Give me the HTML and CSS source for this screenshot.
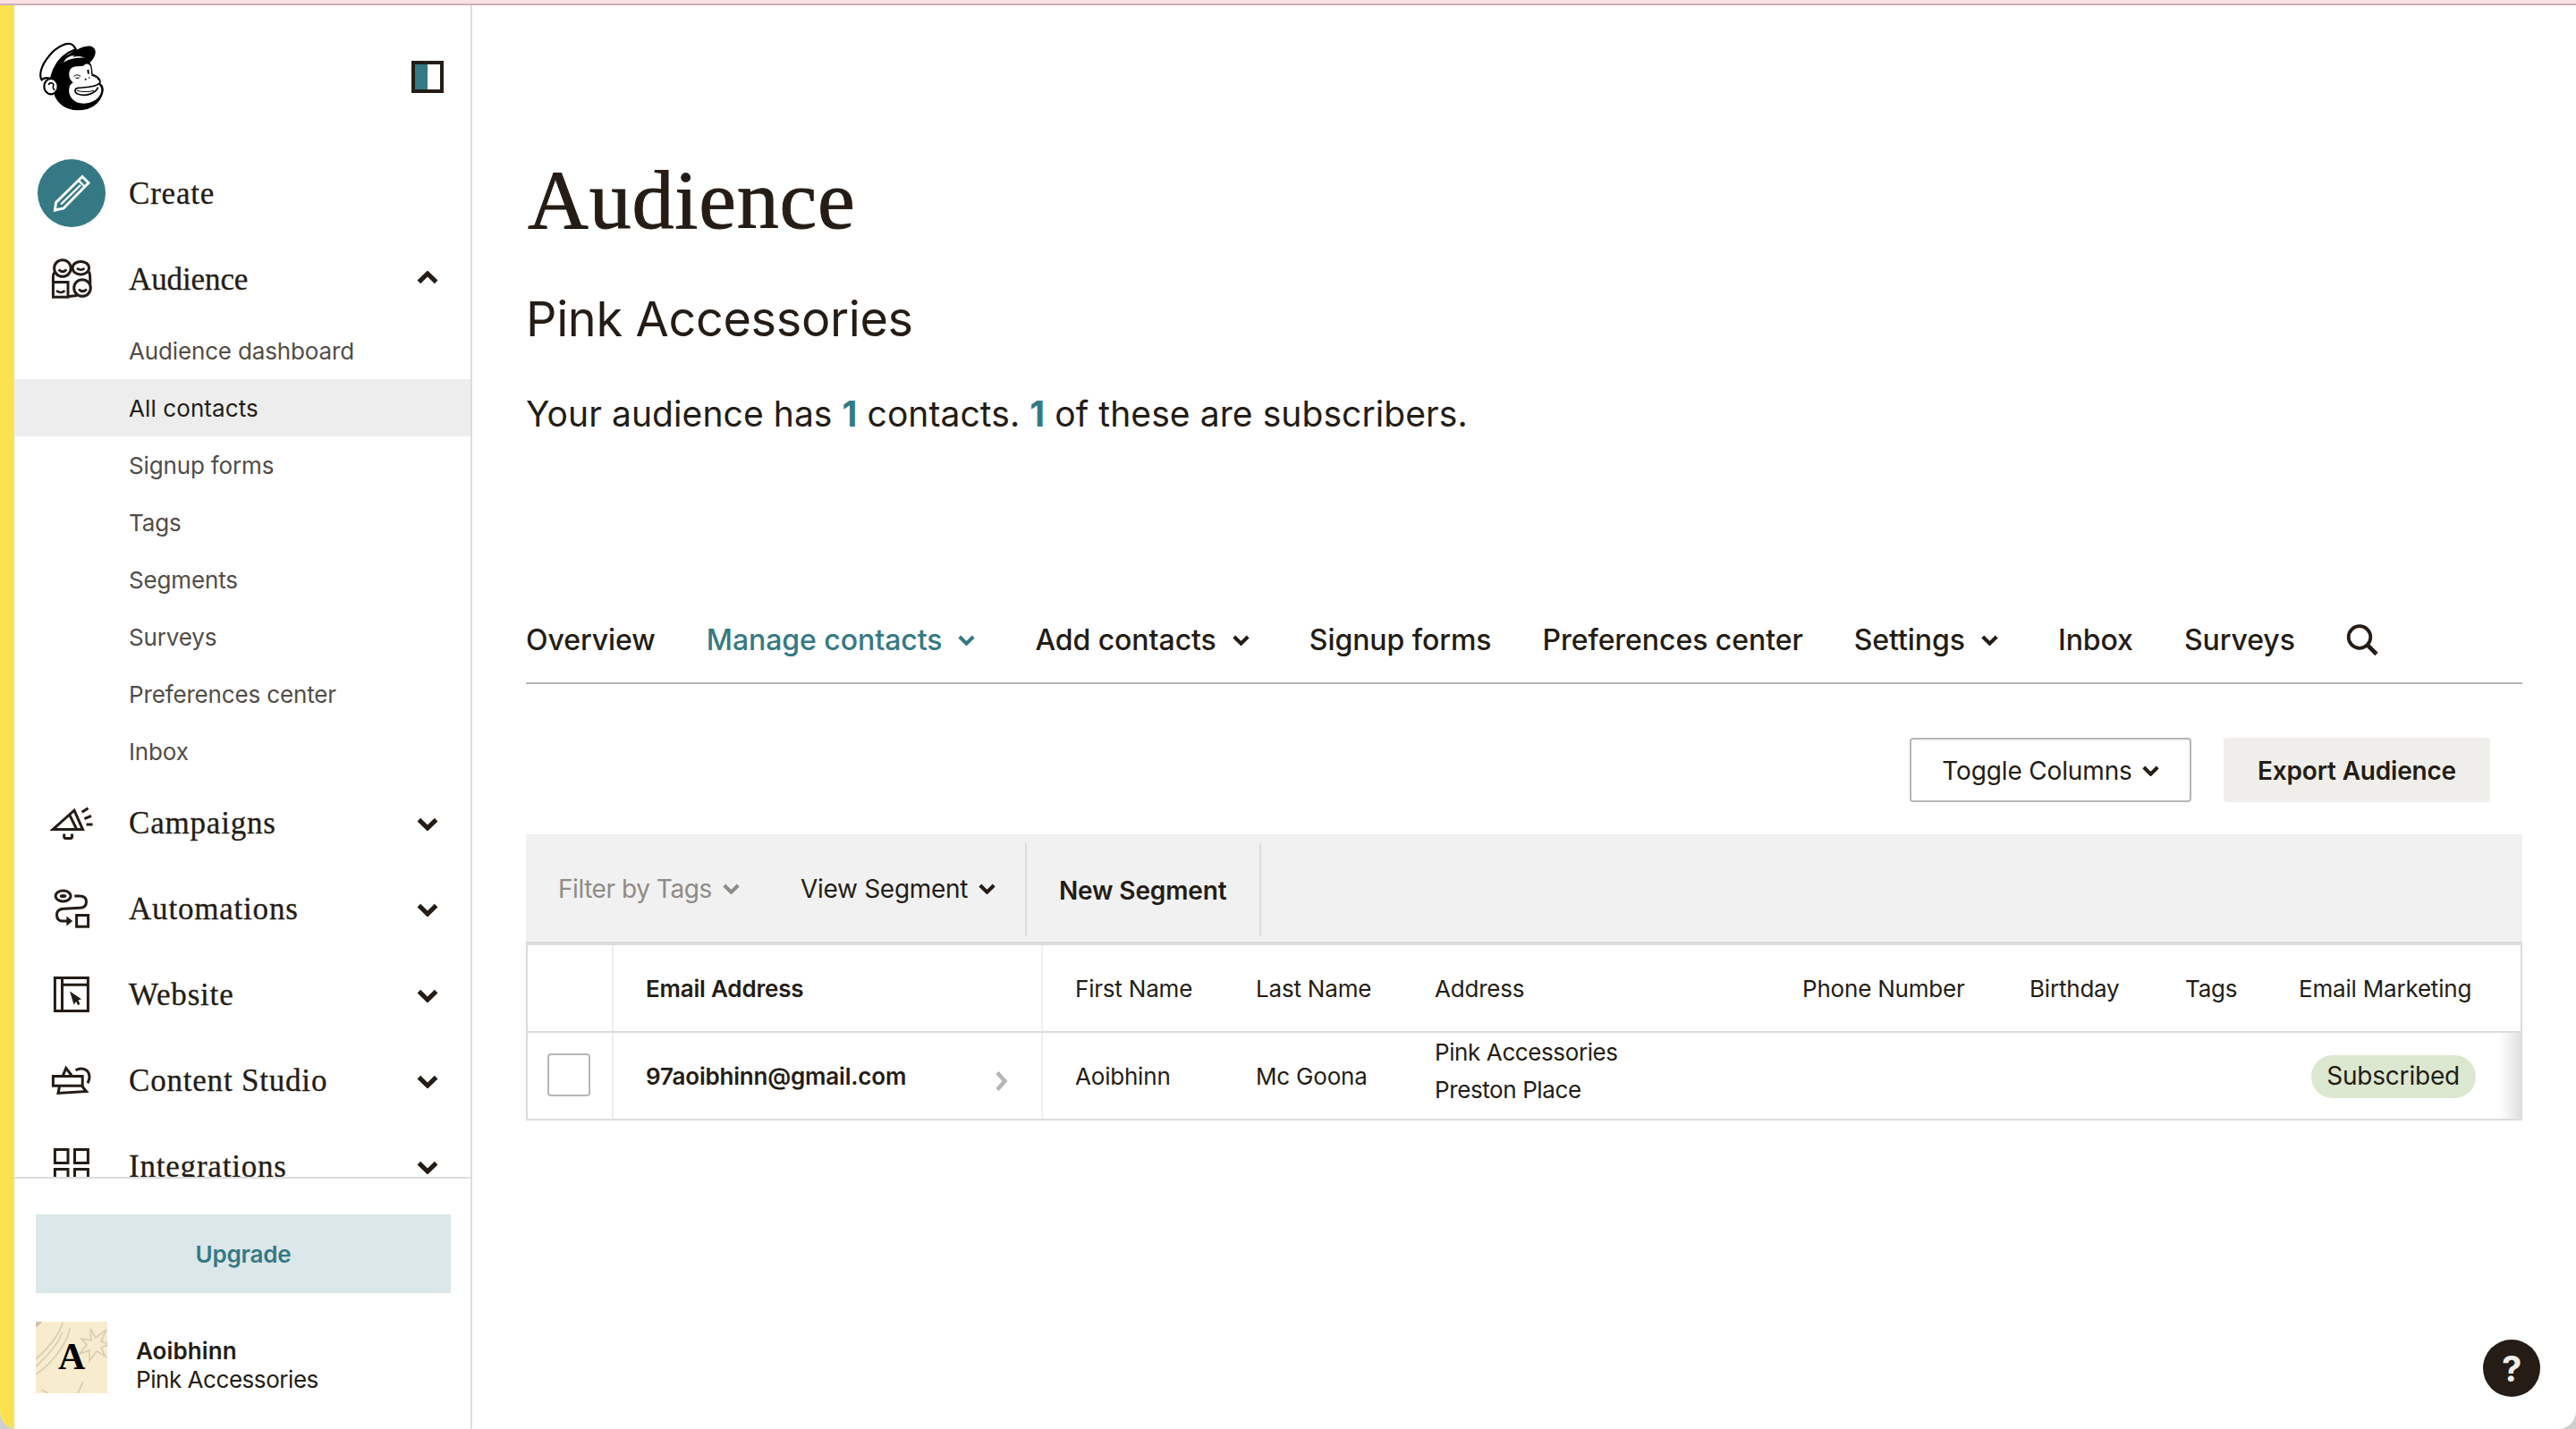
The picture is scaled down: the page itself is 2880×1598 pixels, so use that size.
FILE: index.html
```html
<!DOCTYPE html>
<html lang="en">
<head>
<meta charset="utf-8">
<title>Audience</title>
<link rel="stylesheet" href="styles.css">
</head>
<body>
<svg class="defs" aria-hidden="true">
  <symbol id="chevron" viewBox="0 0 22 14"><path d="M2 2.4 11 11.2 20 2.4" fill="none" stroke="currentColor" stroke-width="4.8"/></symbol>
</svg>
<div class="window">
  <div class="strip"></div>
  <div class="app">
    <aside class="sidebar">
      <div class="scroll">
        <header class="brand">
          <svg class="logo" viewBox="36 48 228 240">
            <path d="M76 180C76 140 98 108 138 94C160 78 200 60 217 66C234 72 232 90 225 103C221 111 215 117 211 120C220 130 219 145 221 158C240 163 252 176 247 190C260 200 259 215 254 227C245 256 215 281 170 280C130 279 100 257 90 222Z"/>
            <path class="cream" d="M50 178C40 163 47 130 76 96C101 66 132 53 148 58C158 61 160 68 164 75C130 88 104 112 91 142C86 154 83 164 81 174C68 170 56 172 50 178Z" stroke="#000" stroke-width="6.5"/>
            <path class="cream" d="M123 119C134 100 150 96 160 97L154 103C166 97 180 98 196 104C170 102 145 106 123 119Z"/>
            <path class="cream" d="M149 181C139 168 140 148 149 139C163 129 184 135 191 130C199 121 210 124 214 134C217 146 214 158 219 163C237 167 248 180 240 193C252 202 252 216 246 227C235 249 205 261 178 256C150 250 138 225 142 206C143 197 149 191 155 187Z"/>
            <ellipse class="cream" cx="81" cy="200" rx="23" ry="26" stroke="#000" stroke-width="6.5"/>
            <g fill="none" stroke="#000" stroke-width="5">
              <path d="M73 195C76 184 92 187 89 197C87 203 86 207 94 212"/>
              <path d="M158 166C165 160 173 160 180 166M164 172 176 171" stroke-width="3.5"/>
              <path d="M205 144 207 158" stroke-width="6"/>
              <path d="M243 190C232 204 195 203 172 205C158 207 159 221 172 226C195 234 229 226 239 203" stroke-width="5"/>
              <path d="M168 214C185 219 210 219 225 214M217 163C230 167 238 172 241 180" stroke-width="3"/>
            </g>
            <circle cx="197" cy="176" r="3"/><circle cx="209" cy="171" r="2.5"/>
          </svg>
          <span class="collapse"></span>
        </header>
        <nav class="menu">
          <a class="item">
            <span class="slot"><span class="create"><svg viewBox="0 0 76 76"><g fill="none" stroke="#fff" stroke-width="3"><path d="M50 19.500 20.500 48.500 19.500 57 29 55 57 26.500Z"/><path d="M45.500 23.500 52.800 30.800M26 50.500 48 29" stroke-width="2.400"/></g></svg></span></span>
            <span class="label">Create</span>
          </a>
          <a class="item open">
            <span class="slot"><svg class="icon" viewBox="0 0 48 48"><circle cx="13.900" cy="12" r="9.300"/><ellipse cx="34.300" cy="11.700" rx="9.200" ry="7.300"/><path d="M3.400 27V21Q3.400 18 5.500 16M43.500 16Q45 18 44.800 30M21 43.500 30 42.500"/><rect x="3.400" y="27.500" width="16.600" height="16.700"/><circle cx="36" cy="34" r="9.300"/><path d="M9.500 13.500Q14 18 18.500 13.500M30 12Q34.500 15.500 38.500 12M7 37Q12 41 16.500 37M32 35.500Q36.500 40 41 35.500" stroke-width="2.600"/></svg></span>
            <span class="label">Audience</span>
            <svg class="caret up"><use href="#chevron"/></svg>
          </a>
          <div class="sub">
            <a>Audience dashboard</a>
            <a class="active">All contacts</a>
            <a>Signup forms</a>
            <a>Tags</a>
            <a>Segments</a>
            <a>Surveys</a>
            <a>Preferences center</a>
            <a>Inbox</a>
          </div>
          <a class="item">
            <span class="slot"><svg class="icon" viewBox="0 0 48 48"><path d="M3 31.600 27 10.200 36.500 31.600ZM21.500 14.700 29.500 31M35.600 12.300 42.500 7.700M38.400 19.700 46 16.300M40.500 26H47.500M15.700 36.500V39.500Q15.700 41.500 17.700 41.500H22.500Q24.500 41.500 24.500 39.500V36.500"/></svg></span>
            <span class="label">Campaigns</span><svg class="caret"><use href="#chevron"/></svg>
          </a>
          <a class="item">
            <span class="slot"><svg class="icon" viewBox="0 0 48 48"><ellipse cx="14.600" cy="10" rx="8.500" ry="5.900"/><ellipse class="solid" cx="14.600" cy="10" rx="3.800" ry="2"/><path d="M27.300 10H33Q40.500 10 40.500 16.500 40.500 23 33 23.300L15 24.300Q7.500 24.800 7.500 31 7.500 38 14 38H19"/><path class="solid" d="M18.400 32.500 25.200 38 18.400 43.500Z"/><rect x="29.600" y="31.500" width="13" height="12.700"/></svg></span>
            <span class="label">Automations</span><svg class="caret"><use href="#chevron"/></svg>
          </a>
          <a class="item">
            <span class="slot"><svg class="icon" viewBox="0 0 48 48"><path d="M5.400 5.500H42.400V42.500H5.400ZM13.500 5.500V42.500M13.500 13.300H42.400"/><path class="solid" d="M22 20.500 35 29.300 31.500 30.500 33.500 35 31 36 29 32 26.600 35.500Z"/></svg></span>
            <span class="label">Website</span><svg class="caret"><use href="#chevron"/></svg>
          </a>
          <a class="item">
            <span class="slot"><svg class="icon" viewBox="0 0 48 48"><rect x="3.400" y="19.500" width="32.800" height="10.700"/><path d="M14.500 18.500 17.800 10.500 24 18.500M28.500 12.800Q36 8.800 41.500 13.500 46.300 19 42 27.300M10.500 31 9 38.500 40.500 36.500 36 31"/></svg></span>
            <span class="label">Content Studio</span><svg class="caret"><use href="#chevron"/></svg>
          </a>
          <a class="item">
            <span class="slot"><svg class="icon" viewBox="0 0 48 48"><path d="M5.400 5.500H20V20.500H5.400ZM27.500 5.500H42.400V20.500H27.500ZM5.400 27.500H20V42.500H5.400ZM27.500 27.500H42.400V42.500H27.500Z"/></svg></span>
            <span class="label">Integrations</span><svg class="caret"><use href="#chevron"/></svg>
          </a>
        </nav>
      </div>
      <footer class="account">
        <button class="upgrade">Upgrade</button>
        <div class="profile">
          <span class="avatar">
            <svg viewBox="0 0 80 80"><g fill="none" stroke="#d9cfb3" stroke-width="1.800"><path d="M30 1C27 14 12 32 0 42M30 12C24 26 14 38 0 50M38 7C36 22 20 46 0 59M53 67 47 80M6 76 14 80"/><path d="M61 8 67 18 79 9 73 22 82 25 73 29 78 39 68 33 60 44 60 32 49 36 57 26 51 19 62 21Z"/></g><path d="M0 0H7Q4 5 0 6Z" fill="#cfc4a6"/></svg>
            <b>A</b>
          </span>
          <span class="who"><b>Aoibhinn</b><span>Pink Accessories</span></span>
        </div>
      </footer>
    </aside>

    <main class="main">
      <h1>Audience</h1>
      <h2>Pink Accessories</h2>
      <p class="stats">Your audience has <b>1</b> contacts. <b>1</b> of these are subscribers.</p>

      <nav class="tabs">
        <a>Overview</a>
        <a class="current">Manage contacts<svg class="drop"><use href="#chevron"/></svg></a>
        <a>Add contacts<svg class="drop"><use href="#chevron"/></svg></a>
        <a>Signup forms</a>
        <a>Preferences center</a>
        <a>Settings<svg class="drop"><use href="#chevron"/></svg></a>
        <a>Inbox</a>
        <a>Surveys</a>
        <svg class="search" viewBox="0 0 36 36"><circle cx="15" cy="14.500" r="12.300" fill="none" stroke="currentColor" stroke-width="3.800"/><path d="M23.500 23 34 33.500" stroke="currentColor" stroke-width="4.600"/></svg>
      </nav>

      <div class="actions">
        <button class="btn outline">Toggle Columns<svg class="drop"><use href="#chevron"/></svg></button>
        <button class="btn solid-btn">Export Audience</button>
      </div>

      <div class="toolbar">
        <span class="filter muted">Filter by Tags<svg class="drop"><use href="#chevron"/></svg></span>
        <span class="filter view">View Segment<svg class="drop"><use href="#chevron"/></svg></span>
        <span class="segment">New Segment</span>
      </div>

      <div class="table">
        <div class="row head">
          <span class="cell line"></span>
          <span class="cell line strong">Email Address</span>
          <span class="cell">First Name</span>
          <span class="cell">Last Name</span>
          <span class="cell">Address</span>
          <span class="cell">Phone Number</span>
          <span class="cell">Birthday</span>
          <span class="cell">Tags</span>
          <span class="cell">Email Marketing</span>
        </div>
        <div class="row body">
          <span class="cell line check"><span class="box"></span></span>
          <span class="cell line strong email">97aoibhinn@gmail.com<svg class="go" viewBox="0 0 14 22"><path d="M2 1.500 10.500 11 2 20.500" fill="none" stroke="#b5b5b5" stroke-width="4.400"/></svg></span>
          <span class="cell">Aoibhinn</span>
          <span class="cell">Mc Goona</span>
          <span class="cell address">Pink Accessories<br>Preston Place</span>
          <span class="cell"></span>
          <span class="cell"></span>
          <span class="cell"></span>
          <span class="cell status"><span class="pill">Subscribed</span></span>
        </div>
      </div>
    </main>
  </div>
  <button class="help">?</button>
</div>
</body>
</html>
```

FILE: styles.css
```css
* { box-sizing: border-box; }

body {
  margin: 0;
  background: #cfcfcd;
  color: #241c15;
  font-family: Inter, "Liberation Sans", sans-serif;
  font-size: 26px;
  letter-spacing: -0.15px;
}

button { font: inherit; letter-spacing: inherit; color: inherit; padding: 0; border: 0; }

.defs { display: none; }

.window {
  position: relative;
  height: 1598px;
  display: flex;
  flex-direction: column;
  overflow: hidden;
  background: #fff;
  border-radius: 0 0 20px 20px;
}

.strip { height: 6px; flex: none; background: #fbdfe5; border-bottom: 2px solid #c8b1b8; }

.app { flex: 1; min-height: 0; display: flex; }

/* Sidebar */
.sidebar {
  width: 528px;
  flex: none;
  display: flex;
  flex-direction: column;
  border-left: 16px solid #fbe14f;
  border-right: 2px solid #dcdcdc;
}

.scroll { height: 1310px; flex: none; overflow: hidden; }

.brand {
  height: 162px;
  display: flex;
  align-items: flex-start;
  justify-content: space-between;
  padding: 40px 30px 0 26px;
}

.logo { width: 76px; height: 80px; }
.cream { fill: #fff; }

.collapse {
  width: 36px;
  height: 36px;
  margin-top: 22px;
  border: 4px solid #241c15;
  background: linear-gradient(90deg, #357984 50%, #fff 50%);
}

.item {
  height: 96px;
  display: flex;
  align-items: center;
  padding: 0 36px 0 26px;
}

.slot { width: 76px; display: flex; justify-content: center; }

.create { width: 76px; height: 76px; border-radius: 50%; background: #357984; }
.create svg { display: block; width: 76px; height: 76px; }

.icon { width: 48px; height: 48px; fill: none; stroke: #241c15; stroke-width: 3; }
.icon .solid { fill: #241c15; stroke: none; }

.label {
  flex: 1;
  margin-left: 26px;
  padding-top: 1px;
  font-family: "Liberation Serif", serif;
  font-size: 35px;
  letter-spacing: 0.8px;
  -webkit-text-stroke: 0.3px #241c15;
}

.open .label { letter-spacing: -0.1px; }

.caret { width: 24px; height: 15px; margin-top: 2px; }
.caret.up { transform: rotate(180deg); margin: 0 0 3px; }

.sub a {
  height: 64px;
  display: flex;
  align-items: center;
  padding-left: 128px;
  color: #524c47;
}

.sub .active { background: #ededed; color: #241c15; letter-spacing: 0.1px; }

.account { flex: 1; border-top: 2px solid #dcdcdc; padding: 40px 22px 0 24px; }

.upgrade {
  display: block;
  width: 464px;
  height: 88px;
  background: #dbe7e9;
  color: #357984;
  font-weight: 600;
}

.profile { display: flex; margin-top: 32px; }

.avatar {
  position: relative;
  width: 80px;
  height: 80px;
  display: flex;
  justify-content: center;
  background: #f8ecce;
  color: #000;
  font: 42px/79px "Liberation Serif", serif;
}

.avatar svg { position: absolute; inset: 0; width: 80px; height: 80px; }
.avatar b { position: relative; }

.who { display: flex; flex-direction: column; justify-content: flex-end; margin: 1px 0 -1px 32px; line-height: 32px; letter-spacing: -0.45px; }
.who b { font-weight: 600; letter-spacing: 0.1px; }

/* Main column */
.main { flex: 1; padding: 0 60px; }

h1 {
  margin: 161px 0 0 2px;
  font: 400 94px/112px "Liberation Serif", serif;
  letter-spacing: 0.8px;
  -webkit-text-stroke: 0.9px #241c15;
}

h2 { margin: 40px 0 0; font-size: 54px; font-weight: 400; line-height: 76px; letter-spacing: -0.35px; }

.stats { margin: 38px 0 0; font-size: 39px; line-height: 60px; letter-spacing: 0.08px; }
.stats b { color: #357984; font-weight: 700; }

.tabs {
  display: flex;
  align-items: center;
  gap: 57px;
  height: 99px;
  margin-top: 173px;
  padding-top: 2px;
  border-bottom: 2px solid #b8b7b5;
  font-size: 32px;
  font-weight: 500;
  letter-spacing: -0.06px;
}

.tabs a { display: flex; align-items: center; }
.tabs .current { color: #357984; }
.tabs .drop { margin: 1px 10px 0 18px; }

.drop { width: 19px; height: 12px; margin-left: 12px; }
.search { width: 36px; height: 36px; }

.actions { display: flex; justify-content: flex-end; gap: 36px; padding: 60px 36px 36px 0; }

.btn {
  height: 72px;
  display: flex;
  align-items: center;
  justify-content: center;
  padding-top: 2px;
  border-radius: 4px;
  font-size: 28px;
}

.outline { width: 315px; background: #fff; border: 2px solid #b8b7b5; }
.outline .drop { margin: 0 0 1px 11px; }
.solid-btn { width: 298px; background: #efeeea; font-weight: 600; letter-spacing: -0.2px; }

.toolbar {
  height: 124px;
  display: flex;
  padding: 10px 0 6px 36px;
  background: #f1f1f1;
  border-bottom: 4px solid #dcdcdc;
  font-size: 28px;
}

.filter { height: 102px; display: flex; align-items: center; width: 271px; letter-spacing: -0.3px; }
.muted { color: #8f8b87; letter-spacing: -0.45px; }
.view { width: 251px; }

.segment {
  height: 104px;
  display: flex;
  align-items: center;
  width: 264px;
  padding: 2px 0 0 36px;
  border: solid #dcdcdc;
  border-width: 0 2px;
  font-weight: 600;
}

.table { border: 2px solid #dcdcdc; border-top: 0; }

.row {
  height: 96px;
  display: grid;
  grid-template-columns: 96px 480px 202px 200px 411px 254px 174px 127px 284px;
}

.head { height: 98px; border-bottom: 2px solid #dcdcdc; }

.body { background: linear-gradient(90deg, rgba(0, 0, 0, 0), rgba(0, 0, 0, 0.12)) right / 24px 100% no-repeat; }

.cell { display: flex; align-items: center; padding-left: 36px; letter-spacing: -0.2px; }
.line { border-right: 2px solid #efefef; }
.strong { font-weight: 600; }

.check { padding: 0 0 2px 22px; }
.box { width: 48px; height: 48px; border: 2px solid #b8b7b5; border-radius: 4px; }

.email { justify-content: space-between; padding-right: 37px; }
.go { width: 14px; height: 22px; margin-top: 12px; }

.address { align-items: flex-start; padding-top: 1px; line-height: 42px; letter-spacing: -0.4px; }

.status { padding: 2px 50px 0 0; justify-content: flex-end; }
.pill {
  height: 48px;
  padding: 0 18px 0 17px;
  border-radius: 24px;
  background: #dbe8cf;
  font-size: 28px;
  line-height: 46px;
}

.help {
  position: absolute;
  right: 40px;
  bottom: 36px;
  width: 64px;
  height: 64px;
  border-radius: 50%;
  background: #241c15;
  color: #efeeea;
  font-size: 40px;
  font-weight: 700;
}
```
